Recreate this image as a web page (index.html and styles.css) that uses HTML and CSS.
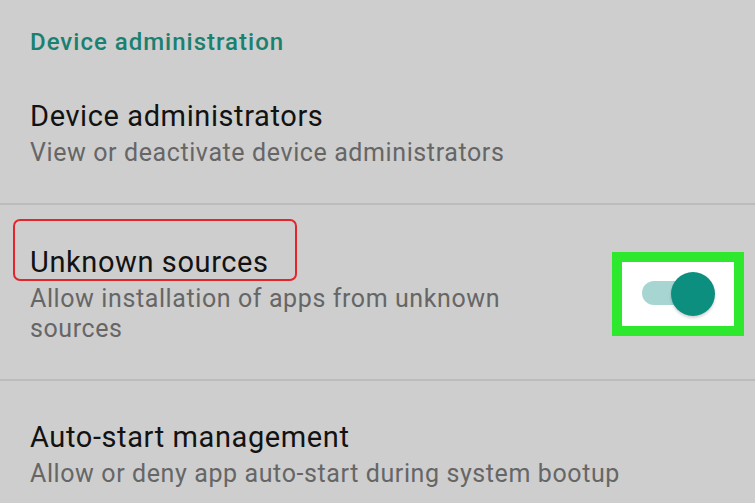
FILE: index.html
```html
<!DOCTYPE html>
<html lang="en">
<head>
<meta charset="utf-8">
<title>Device administration</title>
<link rel="stylesheet" href="styles.css">
</head>
<body>
<div class="screen">
  <div class="section-header">Device administration</div>

  <div class="item item-first">
    <div class="item-text">
      <div class="item-title">Device administrators</div>
      <div class="item-summary">View or deactivate device administrators</div>
    </div>
  </div>

  <div class="divider"></div>

  <div class="item item-switch">
    <div class="item-text">
      <div class="item-title highlighted">Unknown sources<span class="red-mark"></span></div>
      <div class="item-summary narrow">Allow installation of apps from unknown sources</div>
    </div>
    <div class="switch-frame">
      <div class="switch">
        <div class="switch-track"></div>
        <div class="switch-thumb"></div>
      </div>
    </div>
  </div>

  <div class="divider"></div>

  <div class="item item-last">
    <div class="item-text">
      <div class="item-title">Auto-start management</div>
      <div class="item-summary">Allow or deny app auto-start during system bootup</div>
    </div>
  </div>
</div>
</body>
</html>
```
FILE: styles.css
```css
html, body {
  margin: 0;
  padding: 0;
  background: #cecece;
}
body {
  font-family: Roboto, "Noto Sans", "Liberation Sans", sans-serif;
  width: 755px;
  height: 503px;
  overflow: hidden;
}
.screen {
  display: flex;
  flex-direction: column;
}
.section-header {
  margin: 28px 0 0 30px;
  font-size: 24px;
  line-height: 28px;
  font-weight: 500;
  letter-spacing: 1px;
  color: #1a8070;
}
.item {
  display: flex;
  align-items: center;
  padding: 0 11px 0 30px;
}
.item-first {
  margin-top: 42px;
  padding-bottom: 35px;
}
.item-switch {
  margin-top: 39px;
  padding-bottom: 35px;
}
.item-last {
  margin-top: 38px;
}
.item-text {
  flex: 1;
  display: flex;
  flex-direction: column;
  gap: 4px;
}
.item-title {
  font-size: 29px;
  line-height: 36px;
  letter-spacing: 0.6px;
  color: #121212;
}
.item-summary {
  font-size: 25px;
  line-height: 30px;
  letter-spacing: 0.6px;
  color: #666;
}
.narrow {
  width: 520px;
}
.highlighted {
  position: relative;
  align-self: flex-start;
}
.red-mark {
  position: absolute;
  left: -17px;
  top: -25px;
  width: 280px;
  height: 58px;
  border: 2px solid #e2262c;
  border-radius: 7px;
}
.divider {
  height: 2px;
  background: #bcbcbc;
}
.switch-frame {
  width: 112px;
  height: 64px;
  border: 10px solid #2ee82e;
  background: #ffffff;
  display: flex;
  align-items: center;
  justify-content: center;
}
.switch {
  position: relative;
  width: 74px;
  height: 44px;
}
.switch-track {
  position: absolute;
  left: 1px;
  top: 9px;
  width: 58px;
  height: 24px;
  border-radius: 12px;
  background: #a7d6d2;
}
.switch-thumb {
  position: absolute;
  left: 30px;
  top: 0;
  width: 44px;
  height: 44px;
  border-radius: 50%;
  background: #0d8f80;
  box-shadow: 0 2px 3px rgba(0, 0, 0, 0.18);
}
```
